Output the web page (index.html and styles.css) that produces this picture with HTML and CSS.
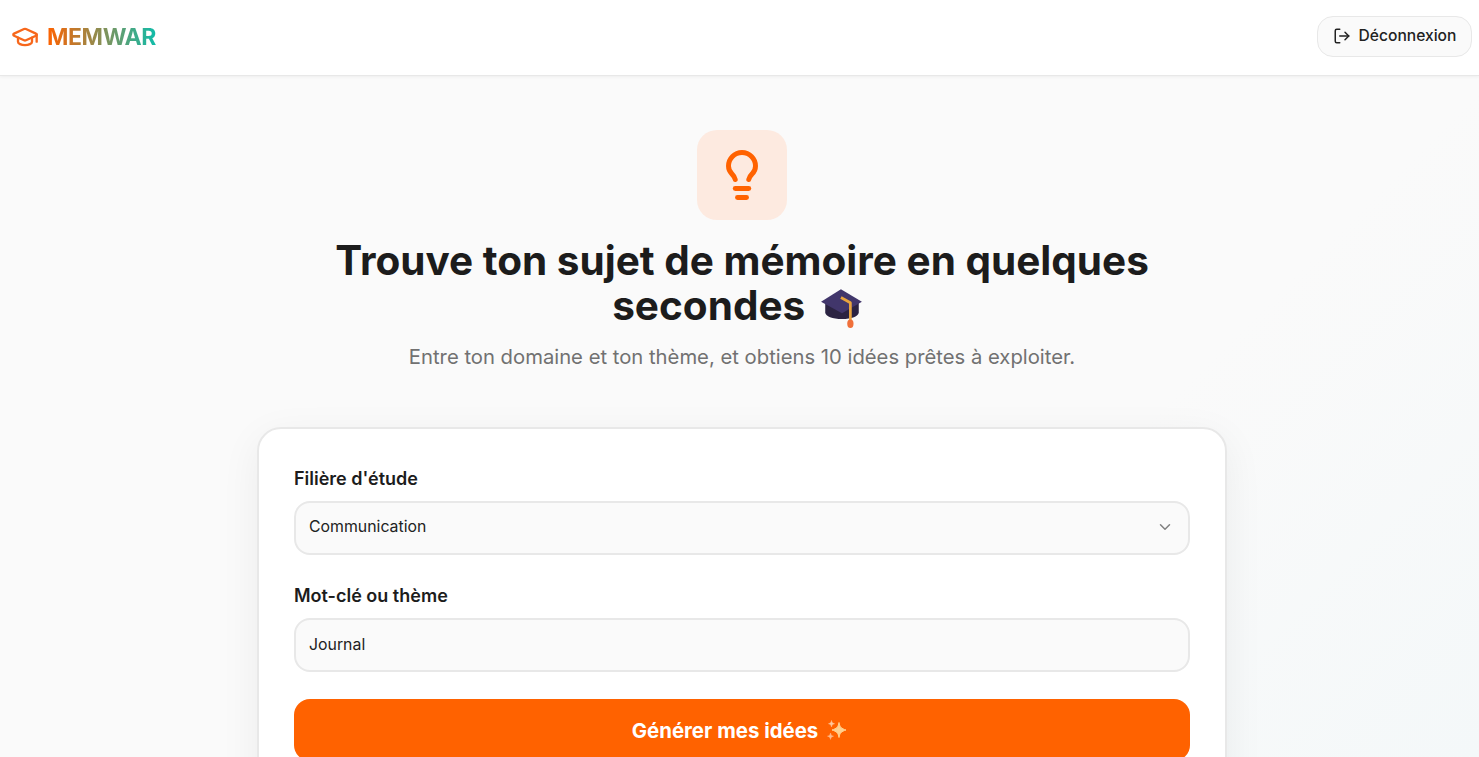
FILE: index.html
```html
<!DOCTYPE html>
<html lang="fr">
<head>
<meta charset="utf-8">
<title>MEMWAR</title>
<link rel="stylesheet" href="styles.css">
</head>
<body>
<header class="topbar">
  <a class="brand" href="#">
    <svg class="brand-icon" viewBox="0 0 24 24" fill="none" stroke="currentColor" stroke-width="2" stroke-linecap="round" stroke-linejoin="round"><path d="M21.42 10.92a1 1 0 0 0-.02-1.84L12.83 5.18a2 2 0 0 0-1.66 0L2.6 9.08a1 1 0 0 0 0 1.83l8.57 3.91a2 2 0 0 0 1.66 0z"/><path d="M22 10v6"/><path d="M6 12.5V16a6 3 0 0 0 12 0v-3.5"/></svg>
    <span class="brand-name">MEMWAR</span>
  </a>
  <button class="logout" type="button">
    <svg class="logout-icon" viewBox="0 0 24 24" fill="none" stroke="currentColor" stroke-width="2" stroke-linecap="round" stroke-linejoin="round"><path d="M9 21H5a2 2 0 0 1-2-2V5a2 2 0 0 1 2-2h4"/><path d="m16 17 5-5-5-5"/><path d="M21 12H9"/></svg>
    Déconnexion
  </button>
</header>
<main class="page">
  <div class="hero-icon">
    <svg viewBox="0 0 24 24" fill="none" stroke="currentColor" stroke-width="2.2" stroke-linecap="round" stroke-linejoin="round"><path d="M15 14c.2-1 .7-1.7 1.5-2.500 1-.9 1.500-2.200 1.500-3.500A6 6 0 0 0 6 8c0 1 .2 2.200 1.500 3.500.7.7 1.300 1.500 1.500 2.500"/><path d="M9 18h6"/><path d="M10 22h4"/></svg>
  </div>
  <h1 class="title">Trouve ton sujet de mémoire en quelques secondes
    <svg class="cap" viewBox="0 0 42 40" role="img" aria-label="🎓"><path d="M5 15h32v9c0 4-7 6.500-16 6.500S5 28 5 24z" fill="#2b2342"/><path d="M1 14 20 2l20 12-19 11z" fill="#41366b"/><path d="M20 10l9 5v18" fill="none" stroke="#e8a33d" stroke-width="2.600" stroke-linejoin="round"/><ellipse cx="29" cy="35" rx="3" ry="4" fill="#f0703a"/></svg></h1>
  <p class="subtitle">Entre ton domaine et ton thème, et obtiens 10 idées prêtes à exploiter.</p>
  <form class="card">
    <div class="field field-first">
      <label class="label" for="filiere">Filière d'étude</label>
      <div class="control select-control" id="filiere">
        <span class="select-value">Communication</span>
        <svg class="chevron" viewBox="0 0 24 24" fill="none" stroke="currentColor" stroke-width="2" stroke-linecap="round" stroke-linejoin="round"><path d="m6 9 6 6 6-6"/></svg>
      </div>
    </div>
    <div class="field">
      <label class="label" for="theme">Mot-clé ou thème</label>
      <input class="control" id="theme" type="text" value="Journal">
    </div>
    <button class="submit" type="button">Générer mes idées
      <svg class="sparkles" viewBox="0 0 20 20" role="img" aria-label="✨"><path d="M12 2.500c.8 4.500 2.200 6 7 7.500-4.800 1.500-6.200 3-7 7.500-.8-4.500-2.200-6-7-7.500 4.800-1.500 6.200-3 7-7.500z" fill="#ffd08f" stroke="#ffd08f"/><path d="M4.500 .500c.4 2 1 2.700 3 3.200-2 .5-2.600 1.200-3 3.200-.4-2-1-2.700-3-3.200 2-.5 2.600-1.200 3-3.200z" fill="#ffc79a" stroke="#ffc79a" stroke-width=".5"/><path d="M3.500 13c.4 2 1 2.700 3 3.200-2 .5-2.600 1.200-3 3.200-.4-2-1-2.700-3-3.200 2-.5 2.600-1.200 3-3.200z" fill="#ffb98a" stroke="#ffb98a" stroke-width=".5"/></svg></button>
  </form>
</main>
</body>
</html>
```
FILE: styles.css
```css
* { box-sizing: border-box; }
html, body { height: 100%; }
body {
  margin: 0;
  font-family: Inter, "Noto Sans", sans-serif;
  color: #1a1a1a;
  background: linear-gradient(135deg, #fafafa 0%, #fafafa 70%, #f4f8f9 100%) fixed;
  overflow: hidden;
}
.topbar {
  height: 76px;
  background: #fff;
  border-bottom: 1px solid #e8e8e8;
  box-shadow: 0 1px 3px rgba(0,0,0,.05);
  display: flex;
  align-items: center;
  justify-content: space-between;
  padding: 0 7px 2px 11px;
}
.brand {
  display: flex;
  align-items: center;
  gap: 8px;
  text-decoration: none;
}
.brand-icon { width: 28px; height: 28px; color: #f7671b; }
.brand-name {
  font-size: 23px;
  font-weight: 700;
  letter-spacing: -.4px;
  line-height: 32px;
  background: linear-gradient(90deg, #ff6200, #10bcaa);
  -webkit-background-clip: text;
  background-clip: text;
  color: transparent;
}
.logout {
  height: 41px;
  width: 155px;
  display: flex;
  align-items: center;
  justify-content: center;
  gap: 8px;
  padding: 0 0 2px;
  font: 500 15.6px Inter, sans-serif;
  color: #222;
  background: #fafafa;
  border: 1px solid #e8e8e8;
  border-radius: 16px;
}
.logout-icon { width: 18px; height: 18px; }
.page {
  display: flex;
  flex-direction: column;
  align-items: center;
  padding: 54px 0 0 5px;
}
.hero-icon {
  width: 90px;
  height: 90px;
  border-radius: 20px;
  background: #fdeae0;
  color: #ff6200;
  display: flex;
  align-items: center;
  justify-content: center;
}
.hero-icon svg { width: 54px; height: 54px; }
.title {
  margin: 18px 0 0;
  width: 896px;
  font-size: 40.5px;
  line-height: 45px;
  font-weight: 700;
  text-align: center;
  color: #1c1c1c;
}
.cap {
  width: 44px;
  height: 42px;
  margin: 0 8px 0 5px;
  vertical-align: -9px;
}
.subtitle {
  margin: 14px 0 0;
  font-size: 20.25px;
  line-height: 28px;
  color: #717171;
}
.card {
  margin-top: 56px;
  width: 970px;
  background: #fff;
  border: 2px solid #e8e8e8;
  border-radius: 24px;
  padding: 37px 35px 40px;
  box-shadow: 0 10px 40px rgba(0,0,0,.06);
  display: flex;
  flex-direction: column;
}
.field { margin-bottom: 27px; }
.field-first { margin-bottom: 28px; }
.label {
  display: block;
  margin-bottom: 9px;
  font-size: 18px;
  line-height: 26px;
  font-weight: 600;
  color: #1c1c1c;
}
.control {
  display: flex;
  align-items: center;
  width: 100%;
  height: 54px;
  padding: 0 14px 2px 13px;
  font: 400 15.85px Inter, sans-serif;
  color: #222;
  background: #fafafa;
  border: 2px solid #e8e8e8;
  border-radius: 16px;
}
.select-control { justify-content: space-between; }
.select-value { position: relative; top: -1px; }
.chevron { width: 18px; height: 18px; color: #808080; }
.submit {
  height: 62px;
  border: 0;
  border-radius: 16px;
  background: #ff6200;
  color: #fff;
  font: 700 20.4px Inter, sans-serif;
  flex: none;
  display: flex;
  align-items: center;
  justify-content: center;
  gap: 9px;
  padding: 0 5px 0 0;
}
.sparkles { width: 20px; height: 20px; }
```
